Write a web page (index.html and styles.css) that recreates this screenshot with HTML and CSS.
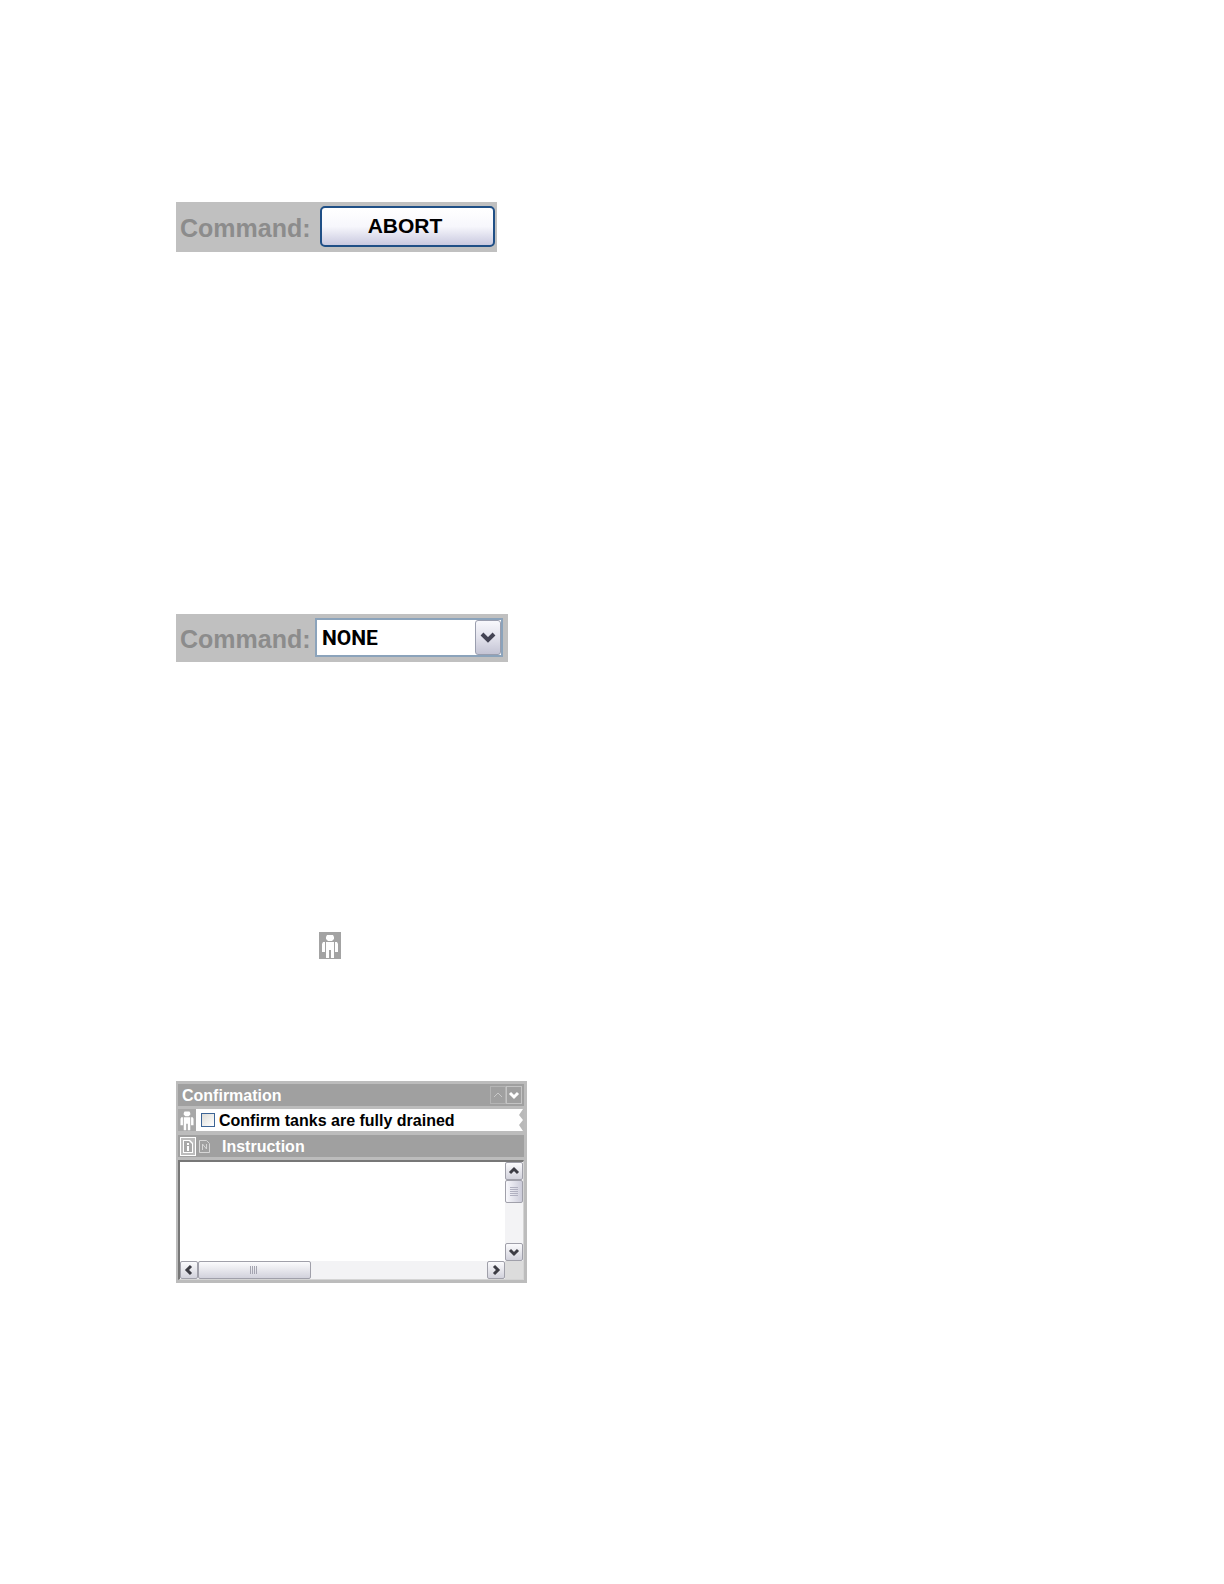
FILE: index.html
```
<!DOCTYPE html>
<html lang="en">

<head>
  <meta charset="utf-8">
  <title>Command and Confirmation</title>
  <link rel="stylesheet" href="styles.css">
</head>

<body>

  <!-- shared person symbol -->
  <svg class="defs" width="0" height="0" aria-hidden="true">
    <symbol id="person" viewBox="0 0 22 27">
      <path fill="#fff" d="M8 3h6l1 2v2l-2 2H9L7 7V5zM7 10h8v16h-3v-8h-2v8H7zM3 12l1-2h2v10H3zM16 10h2l1 2v8h-3z"/>
    </symbol>
  </svg>

  <main class="page">

    <!-- Command button -->
    <div class="command">
      <span class="command-label">Command:</span>
      <button type="button" class="command-btn">ABORT</button>
    </div>

    <!-- Command list -->
    <div class="command command-list">
      <label class="command-label" for="command">Command:</label>
      <div class="select-box">
        <select id="command">
          <option>NONE</option>
        </select>
        <span class="select-arrow">
          <svg width="16" height="12" viewBox="0 0 16 12"><path d="M2 2l6 6 6-6" fill="none" stroke="#434353" stroke-width="4"/></svg>
        </span>
      </div>
    </div>

    <div class="operator">
      <svg width="22" height="27"><use href="#person"/></svg>
    </div>

    <!-- Confirmation panel -->
    <section class="panel">
      <header class="bar">
        <h2>Confirmation</h2>
        <div class="steps">
          <button type="button" class="off" aria-label="Previous">
            <svg width="12" height="12" viewBox="0 0 12 12"><path d="M2 8l4-4 4 4" fill="none" stroke="#c8c8c8" stroke-width="1"/></svg>
          </button>
          <button type="button" aria-label="Next">
            <svg width="12" height="12" viewBox="0 0 12 12"><path d="M2 4l4 4 4-4" fill="none" stroke="#fff" stroke-width="3"/></svg>
          </button>
        </div>
      </header>

      <div class="confirm">
        <span class="confirm-icon"><svg width="18" height="22"><use href="#person"/></svg></span>
        <input type="checkbox" id="drained">
        <label for="drained">Confirm tanks are fully drained</label>
        <svg class="torn" width="6" height="22" viewBox="0 0 6 22"><path d="M6 0v22H5L1 16l4-5L1 6l4-6z" fill="#b9b9b9"/></svg>
      </div>

      <div class="bar instruction">
        <button type="button" class="tab active" aria-label="Information">
          <svg width="14" height="17" viewBox="0 0 14 17"><path d="M2 2h7l3 3v10H2z" fill="#fff"/><path d="M3 3h5l3 3v8H3z" fill="#a8a8a8"/><path d="M6 5h2v2H6zM6 8h2v5H6z" fill="#fff"/></svg>
        </button>
        <button type="button" class="tab" aria-label="Notes">
          <svg width="14" height="17" viewBox="0 0 14 17"><path d="M1.500 2.500h7l3 3v9h-10zM4.500 12V6l4 5V6" fill="none" stroke="#d6d6d6"/></svg>
        </button>
        <h2><label for="instruction">Instruction</label></h2>
      </div>

      <div class="viewer">
        <textarea id="instruction" readonly></textarea>
        <div class="scroll vertical">
          <button type="button" aria-label="Scroll up"><svg width="12" height="12" viewBox="0 0 12 12"><path d="M2 8l4-4 4 4" fill="none" stroke="#3c3c44" stroke-width="3"/></svg></button>
          <span class="thumb"><svg width="8" height="9" viewBox="0 0 8 9"><path d="M0 0h8v1H0zM0 2h8v1H0zM0 4h8v1H0zM0 6h8v1H0zM0 8h8v1H0z" fill="#b0b0c0"/></svg></span>
          <span class="track"></span>
          <button type="button" aria-label="Scroll down"><svg width="12" height="12" viewBox="0 0 12 12"><path d="M2 4l4 4 4-4" fill="none" stroke="#3c3c44" stroke-width="3"/></svg></button>
        </div>
        <div class="scroll horizontal">
          <button type="button" aria-label="Scroll left"><svg width="12" height="12" viewBox="0 0 12 12"><path d="M8 2L4 6l4 4" fill="none" stroke="#3c3c44" stroke-width="3"/></svg></button>
          <span class="thumb"><svg width="9" height="8" viewBox="0 0 9 8"><path d="M0 0h1v8H0zM2 0h1v8H2zM4 0h1v8H4zM6 0h1v8H6z" fill="#a4a4b0"/></svg></span>
          <span class="track"></span>
          <button type="button" aria-label="Scroll right"><svg width="12" height="12" viewBox="0 0 12 12"><path d="M4 2l4 4-4 4" fill="none" stroke="#3c3c44" stroke-width="3"/></svg></button>
        </div>
        <span class="corner"></span>
      </div>
    </section>

  </main>

</body>

</html>
```
FILE: styles.css
```
* {
  margin: 0;
  padding: 0;
  box-sizing: border-box;
  font-family: "Liberation Sans", Arial, Helvetica, sans-serif;
}

body {
  min-height: 100vh;
  background: #fff;
}

svg {
  display: block;
  flex: none;
}

.defs {
  position: absolute;
}

.page {
  display: flex;
  flex-direction: column;
  align-items: flex-start;
  padding: 202px 176px 0;
}

/* Command rows */

.command {
  display: flex;
  align-items: center;
  padding: 4px 2px 5px 4px;
  background: #c0c0c0;
}

.command-label {
  width: 140px;
  padding-top: 4px;
  color: #8c8c8c;
  font-size: 25px;
  font-weight: bold;
}

.command-btn {
  width: 175px;
  height: 41px;
  padding: 0 5px 2px 0;
  border: 2px solid #1f4f86;
  border-radius: 5px;
  background: linear-gradient(#fff, #f7f7fc 50%, #c9c9e0);
  color: #000;
  font-size: 21px;
  font-weight: bold;
}

.command-list {
  margin-top: 362px;
  padding-right: 5px;
}

.command-list .command-label {
  width: 135px;
}

.select-box {
  position: relative;
}

.select-box select {
  display: block;
  width: 188px;
  height: 39px;
  padding: 0 30px 0 5px;
  border: 2px solid #8ba3bb;
  border-radius: 0;
  background: #fff;
  color: #000;
  font-family: Roboto, "Liberation Sans", sans-serif;
  font-size: 21px;
  font-weight: bold;
  appearance: none;
}

/* arrow lies over the right end of the select */
.select-arrow {
  position: absolute;
  top: 2px;
  right: 2px;
  display: flex;
  align-items: center;
  justify-content: center;
  width: 26px;
  height: 35px;
  border: 1px solid #9a9eae;
  border-radius: 3px;
  background: linear-gradient(#f8f8fc, #e2e2ec 50%, #c4c4d4);
  pointer-events: none;
}

.operator {
  margin: 270px 0 122px 143px;
  background: #a3a3a3;
}

/* Confirmation panel */

.panel {
  width: 100%;
  max-width: 351px;
  padding: 3px 3px 3px 2px;
  background: #bcbcbc;
}

.bar {
  display: flex;
  align-items: center;
  height: 22px;
  background: #a0a0a0;
}

.bar h2 {
  padding-top: 1px;
  color: #fff;
  font-size: 16px;
  line-height: 22px;
}

.bar > h2:first-child {
  padding-left: 4px;
}

.steps {
  display: flex;
  margin-left: auto;
  padding-right: 2px;
}

.steps button {
  display: flex;
  align-items: center;
  justify-content: center;
  width: 16px;
  height: 18px;
  border: 1px solid #c4c4c4;
  background: #a0a0a0;
}

.steps .off {
  border-color: #b4b4b4;
}

.confirm {
  display: flex;
  align-items: center;
  height: 22px;
  margin: 3px 0 4px;
  background: #fff;
}

.confirm-icon {
  background: #a8a8a8;
}

.confirm input {
  width: 14px;
  height: 14px;
  margin: 0 4px 0 5px;
  border: 1px solid #3c6496;
  background: linear-gradient(135deg, #dcdcd8, #fff);
  appearance: none;
}

.confirm input:checked {
  background: #3c6496;
}

.confirm label {
  padding-top: 1px;
  color: #000;
  font-size: 16px;
  font-weight: bold;
  line-height: 22px;
}

.torn {
  margin-left: auto;
}

.instruction {
  padding-left: 2px;
}

.tab {
  display: flex;
  align-items: center;
  justify-content: center;
  width: 16px;
  height: 19px;
  margin-right: 1px;
  border: 0;
  background: none;
}

.tab.active {
  border: 1px solid #fff;
  background: #bcbcbc;
}

.instruction h2 {
  margin-left: 8px;
}

/* text area with its scroll bars */

.viewer {
  display: grid;
  grid-template-columns: 1fr 18px;
  grid-template-rows: 99px 18px;
  margin-top: 3px;
  border: 1px solid #d4d4d4;
  border-top: 2px solid #777;
  border-left: 2px solid #777;
}

.viewer textarea {
  width: 100%;
  height: 100%;
  padding: 2px 4px;
  border: 0;
  background: #fff;
  font-size: 16px;
  resize: none;
}

.scroll {
  display: flex;
  background: #f3f3f5;
}

.vertical {
  flex-direction: column;
}

.scroll button,
.thumb {
  display: flex;
  align-items: center;
  justify-content: center;
  width: 18px;
  height: 18px;
  border: 1px solid #a0a0aa;
  border-radius: 2px;
  background: linear-gradient(#fbfbfd, #d2d2dc);
}

.vertical .thumb {
  height: 23px;
  background: linear-gradient(90deg, #f8f8fc, #ccccda);
}

.horizontal .thumb {
  width: 113px;
}

.track {
  flex: 1;
}

.corner {
  background: #dcdcdc;
}
```
